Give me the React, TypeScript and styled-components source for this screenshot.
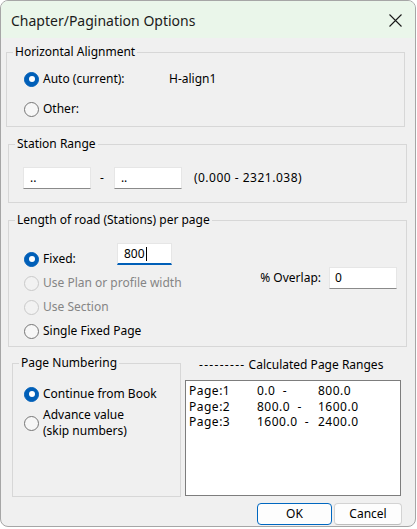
import React from "react";
import styled, { createGlobalStyle } from "styled-components";

const Global = createGlobalStyle`
  html, body { margin: 0; padding: 0; background: #ffffff; }
  body {
    font-family: "Noto Sans", "Open Sans", sans-serif;
    font-size: 12px;
    color: #000;
  }
  * { box-sizing: border-box; }
`;

const Window = styled.div`
  width: 416px;
  height: 527px;
  border: 1px solid #a6a6a6;
  border-radius: 8px;
  background: #f0f0f0;
  overflow: hidden;
  display: flex;
  flex-direction: column;
`;

const TitleBar = styled.div`
  flex: none;
  height: 37px;
  background: #eaf6ea;
  display: flex;
  align-items: center;
  justify-content: space-between;
  padding: 2px 13px 0 10px;
`;

const TitleText = styled.div`
  font-size: 14px;
  line-height: 20px;
  color: #1b1b1b;
`;

const CloseIcon = styled.svg`
  display: block;
  width: 13px;
  height: 13px;
  margin-top: -1px;
`;

const Content = styled.div`
  flex: 1;
  display: flex;
  flex-direction: column;
`;

const Group = styled.fieldset<{ $ml: number; $mt: number; $w: number }>`
  flex: none;
  margin: ${(p) => p.$mt}px 0 0 ${(p) => p.$ml}px;
  width: ${(p) => p.$w}px;
  padding: 0;
  border: 1px solid #d7d7d7;
  min-width: 0;
`;

const Legend = styled.legend`
  margin-left: 6px;
  padding: 0 2px;
  font-size: 12px;
  line-height: 14px;
  color: #000;
`;

const GroupBody = styled.div<{ $pad: string; $h?: number }>`
  padding: ${(p) => p.$pad};
  display: flex;
  flex-direction: column;
  ${(p) => (p.$h ? `height: ${p.$h}px;` : "")}
`;

const Stack = styled.div<{ $gap: number }>`
  display: flex;
  flex-direction: column;
  gap: ${(p) => p.$gap}px;
`;

const Row = styled.div<{ $align?: string; $gap?: number; $mt?: number }>`
  display: flex;
  align-items: ${(p) => p.$align ?? "center"};
  gap: ${(p) => p.$gap ?? 0}px;
  margin-top: ${(p) => p.$mt ?? 0}px;
`;

const SplitRow = styled.div`
  display: flex;
  align-items: flex-start;
  justify-content: space-between;
  padding-right: 9px;
`;

const RadioLabel = styled.label<{ $disabled?: boolean; $w?: number; $mt?: number }>`
  display: flex;
  align-items: center;
  gap: 4px;
  min-height: 20px;
  line-height: 16px;
  color: ${(p) => (p.$disabled ? "#858585" : "#000")};
  ${(p) => (p.$w ? `width: ${p.$w}px; flex: none;` : "")}
  ${(p) => (p.$mt ? `margin-top: ${p.$mt}px;` : "")}
`;

const RadioDot = styled.span<{ $checked?: boolean; $disabled?: boolean }>`
  flex: none;
  width: 15px;
  height: 15px;
  border-radius: 50%;
  position: relative;
  background: ${(p) => (p.$checked ? "#005fb8" : p.$disabled ? "#f2f2f2" : "#f7f7f7")};
  border: 1px solid
    ${(p) => (p.$checked ? "#005fb8" : p.$disabled ? "#c9c9c9" : "#767676")};
  &::after {
    content: "";
    display: ${(p) => (p.$checked ? "block" : "none")};
    position: absolute;
    left: 50%;
    top: 50%;
    width: 6px;
    height: 6px;
    margin: -3px 0 0 -3px;
    border-radius: 50%;
    background: #ffffff;
  }
`;

const RadioText = styled.span``;

const Value = styled.span<{ $ml?: number; $numeric?: boolean }>`
  line-height: 20px;
  margin-left: ${(p) => p.$ml ?? 0}px;
  letter-spacing: ${(p) => (p.$numeric ? "0.5px" : "normal")};
`;

const Edit = styled.div<{ $w: number; $focused?: boolean; $pl?: number }>`
  flex: none;
  width: ${(p) => p.$w}px;
  height: 22px;
  background: #ffffff;
  border: 1px solid #e6e6e6;
  border-bottom: ${(p) => (p.$focused ? "2px solid #005fb8" : "1px solid #8a8a8a")};
  padding-left: ${(p) => p.$pl ?? 6}px;
  display: flex;
  align-items: center;
  line-height: 16px;
  color: #000;
`;

const Caret = styled.span`
  display: inline-block;
  width: 1px;
  height: 14px;
  background: #000;
  margin-left: 1px;
`;

const Dash = styled.span<{ $mx: string }>`
  margin: ${(p) => p.$mx};
  line-height: 20px;
`;

const BottomRow = styled.div`
  flex: none;
  display: flex;
  align-items: flex-start;
  padding-left: 11px;
  gap: 4px;
`;

const RangesColumn = styled.div`
  display: flex;
  flex-direction: column;
  margin-top: 10px;
  width: 216px;
`;

const RangesHeading = styled.div`
  padding-left: 14px;
  line-height: 16px;
  white-space: pre;
`;

const Dashes = styled.span`
  letter-spacing: 1.3px;
`;

const ListBox = styled.div`
  margin-top: 7px;
  height: 116px;
  background: #ffffff;
  border: 1px solid #7d7d7d;
  padding: 2px 3px;
  display: grid;
  grid-template-columns: 68px 61px auto;
  align-content: start;
  line-height: 15.5px;
  letter-spacing: 0.5px;
`;

const Cell = styled.span`
  white-space: pre;
`;

const ButtonRow = styled.div`
  flex: none;
  display: flex;
  justify-content: flex-end;
  gap: 2px;
  margin-top: 6px;
  padding-right: 13px;
`;

const Button = styled.button<{ $primary?: boolean; $w: number }>`
  width: ${(p) => p.$w}px;
  height: 22px;
  padding: 0;
  font-family: inherit;
  font-size: 12px;
  line-height: 18px;
  color: #000;
  background: #fdfdfd;
  border: 1px solid ${(p) => (p.$primary ? "#0067c0" : "#d3d3d3")};
  border-bottom-color: ${(p) => (p.$primary ? "#0067c0" : "#bdbdbd")};
  border-radius: 4px;
`;

type RadioProps = {
  checked?: boolean;
  disabled?: boolean;
  w?: number;
  mt?: number;
  children: React.ReactNode;
};

function Radio({ checked, disabled, w, mt, children }: RadioProps) {
  return (
    <RadioLabel $disabled={disabled} $w={w} $mt={mt}>
      <RadioDot $checked={checked} $disabled={disabled} />
      <RadioText>{children}</RadioText>
    </RadioLabel>
  );
}

const ranges = [
  ["Page:1", "0.0  -", "800.0"],
  ["Page:2", "800.0  -", "1600.0"],
  ["Page:3", "1600.0  -", "2400.0"],
];

export default function App() {
  return (
    <>
      <Global />
      <Window>
        <TitleBar>
          <TitleText>Chapter/Pagination Options</TitleText>
          <CloseIcon viewBox="0 0 13 13">
            <path d="M0.5 0.5 L12.5 12.5 M12.5 0.5 L0.5 12.5" stroke="#1a1a1a" strokeWidth="1.1" fill="none" />
          </CloseIcon>
        </TitleBar>
        <Content>
          <Group $ml={5} $mt={7} $w={399}>
            <Legend>Horizontal Alignment</Legend>
            <GroupBody $pad="10px 0 7px 17px">
              <Stack $gap={10}>
                <Row>
                  <Radio checked w={145}>Auto (current):</Radio>
                  <Value>H-align1</Value>
                </Row>
                <Radio>Other:</Radio>
              </Stack>
            </GroupBody>
          </Group>

          <Group $ml={7} $mt={10} $w={399}>
            <Legend>Station Range</Legend>
            <GroupBody $pad="16px 0 13px 14px">
              <Row>
                <Edit $w={68}>..</Edit>
                <Dash $mx="0 10px 0 9px">-</Dash>
                <Edit $w={68}>..</Edit>
                <Value $ml={12} $numeric>(0.000 - 2321.038)</Value>
              </Row>
            </GroupBody>
          </Group>

          <Group $ml={7} $mt={10} $w={399}>
            <Legend>Length of road (Stations) per page</Legend>
            <GroupBody $pad="16px 0 5px 15px">
              <SplitRow>
                <Stack $gap={4}>
                  <Row $align="flex-start">
                    <Radio checked w={93} mt={6}>Fixed:</Radio>
                    <Edit $w={55} $focused>
                      800<Caret />
                    </Edit>
                  </Row>
                  <Radio disabled>Use Plan or profile width</Radio>
                  <Radio disabled>Use Section</Radio>
                  <Radio>Single Fixed Page</Radio>
                </Stack>
                <Row $gap={8} $mt={24}>
                  <Value>% Overlap:</Value>
                  <Edit $w={68} $pl={5}>0</Edit>
                </Row>
              </SplitRow>
            </GroupBody>
          </Group>

          <BottomRow>
            <Group $ml={0} $mt={9} $w={169}>
              <Legend>Page Numbering</Legend>
              <GroupBody $pad="14px 0 0 11px" $h={126}>
                <Stack $gap={3}>
                  <Radio checked>Continue from Book</Radio>
                  <Radio>
                    Advance value
                    <br />
                    (skip numbers)
                  </Radio>
                </Stack>
              </GroupBody>
            </Group>
            <RangesColumn>
              <RangesHeading>
                <Dashes>---------</Dashes> Calculated Page Ranges
              </RangesHeading>
              <ListBox>
                {ranges.map((r) => (
                  <React.Fragment key={r[0]}>
                    <Cell>{r[0]}</Cell>
                    <Cell>{r[1]}</Cell>
                    <Cell>{r[2]}</Cell>
                  </React.Fragment>
                ))}
              </ListBox>
            </RangesColumn>
          </BottomRow>

          <ButtonRow>
            <Button $primary $w={75}>OK</Button>
            <Button $w={68}>Cancel</Button>
          </ButtonRow>
        </Content>
      </Window>
    </>
  );
}
